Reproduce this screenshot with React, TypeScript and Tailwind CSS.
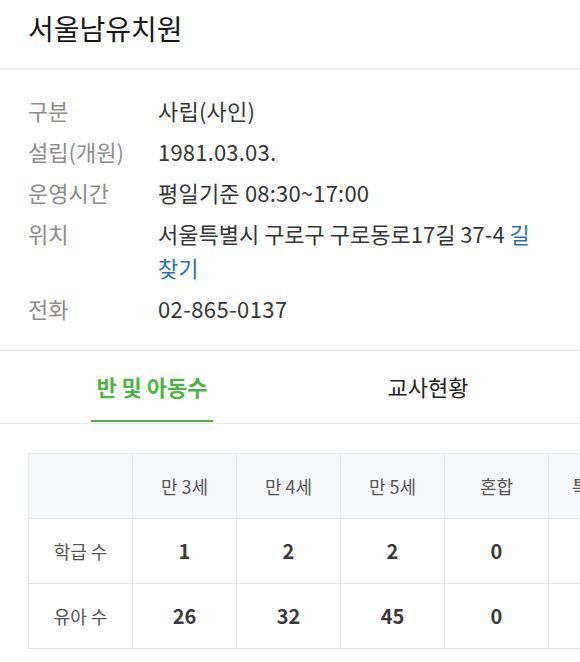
const font = { fontFamily: '"Noto Sans CJK KR", "Noto Sans", sans-serif' };

const info = [
  { label: "구분", value: "사립(사인)" },
  { label: "설립(개원)", value: "1981.03.03." },
  { label: "운영시간", value: "평일기준 08:30~17:00" },
];

const cols = ["만 3세", "만 4세", "만 5세", "혼합", "특수"];

const rows = [
  { name: "학급 수", values: ["1", "2", "2", "0", "0"] },
  { name: "유아 수", values: ["26", "32", "45", "0", "0"] },
];

export default function App() {
  return (
    <div className="min-h-screen bg-white text-[#333]" style={font}>
      {/* Header */}
      <div className="h-[70px] px-7 pt-[8px] border-b-2 border-[#efefef]">
        <h1 className="text-[28px] leading-[40px] text-[#161616]">서울남유치원</h1>
      </div>

      {/* Info */}
      <div className="px-7 pt-[23px] pb-[25px] border-b border-[#e9e9e9] flex flex-col gap-[7px] text-[22px] leading-[34px]">
        {info.map((row) => (
          <div key={row.label} className="flex">
            <div className="w-[130px] shrink-0 text-[#8c8c8c]">{row.label}</div>
            <div className="text-[#363636] tracking-[0.2px]">{row.value}</div>
          </div>
        ))}
        <div className="flex">
          <div className="w-[130px] shrink-0 text-[#8c8c8c]">위치</div>
          <div className="text-[#363636]">
            서울특별시 구로구 구로동로17길 37-4 <span className="text-[#2d6db5]">길<br />찾기</span>
          </div>
        </div>
        <div className="flex">
          <div className="w-[130px] shrink-0 text-[#8c8c8c]">전화</div>
          <div className="text-[#363636] tracking-[0.4px]">02-865-0137</div>
        </div>
      </div>

      {/* Tabs */}
      <div className="h-[73px] px-[14px] flex border-b border-[#ececec]">
        <div className="flex-1 flex justify-center">
          <div className="relative flex items-center px-[5px] pb-[2px]">
            <span className="text-[22px] font-bold text-[#4bb543]">반 및 아동수</span>
            <div className="absolute left-0 right-0 bottom-[1px] h-[2px] bg-[#4bb543]" />
          </div>
        </div>
        <div className="flex-1 flex justify-center items-center pb-[2px]">
          <span className="text-[22px] text-[#222]">교사현황</span>
        </div>
      </div>

      {/* Table */}
      <div className="pt-[29px] pl-7 overflow-hidden">
        <table className="table-fixed border-collapse w-[600px] text-center">
          <thead>
            <tr className="h-[65px] bg-[#f5f7fa]">
              <th className="w-[104px] border border-[#e6e9ee]" />
              {cols.map((c, i) => (
                <th
                  key={c}
                  className={`${i === 4 ? "w-[80px]" : "w-[104px]"} border border-[#e6e9ee] text-[18px] font-normal text-[#555]`}
                >
                  {c}
                </th>
              ))}
            </tr>
          </thead>
          <tbody>
            {rows.map((r) => (
              <tr key={r.name} className="h-[65px]">
                <td className="border border-[#e6e9ee] text-[18px] text-[#555]">{r.name}</td>
                {r.values.map((v, i) => (
                  <td key={i} className="border border-[#e6e9ee] text-[20px] font-bold text-[#3a3a3a]">
                    {i === 4 ? "" : v}
                  </td>
                ))}
              </tr>
            ))}
          </tbody>
        </table>
      </div>
    </div>
  );
}
